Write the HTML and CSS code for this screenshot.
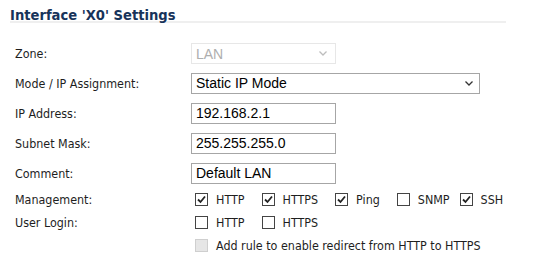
FILE: index.html
```html
<!DOCTYPE html>
<html lang="en">
<head>
    <meta charset="UTF-8">
    <meta name="viewport" content="width=device-width, initial-scale=1.0">
    <title>Interface 'X0' Settings</title>
    <link rel="stylesheet" href="styles.css">
</head>
<body>
    <div class="panel">
        <h1 class="title">Interface 'X0' Settings</h1>

        <form class="form">
            <div class="row">
                <label class="label">Zone:</label>
                <div class="select select-short is-disabled">
                    <select disabled><option>LAN</option></select>
                    <svg class="chevron" width="8" height="5" viewBox="0 0 8 5"><polyline points="0.5,0.5 4,4 7.5,0.5" /></svg>
                </div>
            </div>

            <div class="row">
                <label class="label">Mode / IP Assignment:</label>
                <div class="select select-wide">
                    <select><option>Static IP Mode</option></select>
                    <svg class="chevron" width="8" height="5" viewBox="0 0 8 5"><polyline points="0.5,0.5 4,4 7.5,0.5" /></svg>
                </div>
            </div>

            <div class="row">
                <label class="label">IP Address:</label>
                <input class="field" type="text" value="192.168.2.1">
            </div>

            <div class="row">
                <label class="label">Subnet Mask:</label>
                <input class="field" type="text" value="255.255.255.0">
            </div>

            <div class="row">
                <label class="label">Comment:</label>
                <input class="field" type="text" value="Default LAN">
            </div>

            <div class="row row-check">
                <label class="label">Management:</label>
                <div class="checks">
                    <span class="check"><span class="box on"><svg width="11" height="11" viewBox="0 0 11 11"><polyline points="2,5.5 4.5,8 9,2.5" /></svg></span>HTTP</span>
                    <span class="check"><span class="box on"><svg width="11" height="11" viewBox="0 0 11 11"><polyline points="2,5.5 4.5,8 9,2.5" /></svg></span>HTTPS</span>
                    <span class="check"><span class="box on"><svg width="11" height="11" viewBox="0 0 11 11"><polyline points="2,5.5 4.5,8 9,2.5" /></svg></span>Ping</span>
                    <span class="check check-tight"><span class="box"></span>SNMP</span>
                    <span class="check"><span class="box on"><svg width="11" height="11" viewBox="0 0 11 11"><polyline points="2,5.5 4.5,8 9,2.5" /></svg></span>SSH</span>
                </div>
            </div>

            <div class="row row-check">
                <label class="label">User Login:</label>
                <div class="checks">
                    <span class="check"><span class="box"></span>HTTP</span>
                    <span class="check"><span class="box"></span>HTTPS</span>
                </div>
            </div>

            <div class="row row-check">
                <span class="label"></span>
                <div class="checks">
                    <span class="check"><span class="box off"></span>Add rule to enable redirect from HTTP to HTTPS</span>
                </div>
            </div>
        </form>
    </div>
</body>
</html>
```

FILE: styles.css
```css
:root {
    --navy: #17335a;
    --text: #1e1e1e;
    --border: #a6a6a6;
    --light-border: #dedede;
    --rule: #efefef;
}

* {
    margin: 0;
    padding: 0;
    box-sizing: border-box;
}

body {
    background: #fff;
    color: var(--text);
    font-family: 'DejaVu Sans Condensed', 'DejaVu Sans', sans-serif;
    font-size: 12.4px;
}

.panel {
    width: 540px;
    height: 272px;
}

.title {
    margin: 0 34px 0 10px;
    padding-top: 8px;
    font-size: 14.6px;
    line-height: 13px;
    font-weight: bold;
    color: var(--navy);
    border-bottom: 2px solid var(--rule);
}

.form {
    padding: 16px 0 0 15px;
}

.row {
    display: grid;
    grid-template-columns: 176px 1fr;
    align-items: center;
    height: 30px;
}

.row:first-child {
    height: 29px;
}

.row-check {
    height: 23px;
}

.label {
    color: var(--text);
}

/* selects */
.select {
    position: relative;
    height: 21px;
}

.select-short {
    width: 145px;
}

.select-wide {
    width: 289px;
}

.select select {
    appearance: none;
    -webkit-appearance: none;
    width: 100%;
    height: 100%;
    padding: 0 20px 0 4px;
    border: 1px solid var(--border);
    border-radius: 0;
    background: #fff;
    color: #000;
    font-family: 'Liberation Sans', Arial, sans-serif;
    font-size: 14px;
    outline: none;
}

.chevron {
    position: absolute;
    right: 7px;
    top: 8px;
    fill: none;
    stroke: #333;
    stroke-width: 1.3;
}

.is-disabled select {
    border-color: var(--light-border);
    color: #8c8c8c;
}

.is-disabled .chevron {
    right: 9px;
    stroke: #bdbdbd;
}

/* text inputs */
.field {
    width: 145px;
    height: 21px;
    padding: 0 4px;
    border: 1px solid var(--border);
    border-radius: 0;
    color: #000;
    font-family: 'Liberation Sans', Arial, sans-serif;
    font-size: 14px;
    outline: none;
}

/* checkboxes */
.checks {
    display: flex;
    align-items: center;
    padding-left: 4px;
}

.check {
    display: flex;
    align-items: center;
    gap: 8px;
    margin-right: 17px;
    white-space: nowrap;
}

.check-tight {
    margin-right: 10px;
}

.box {
    display: flex;
    align-items: center;
    justify-content: center;
    width: 13px;
    height: 13px;
    border: 1px solid #444;
    background: #fff;
}

.box svg {
    fill: none;
    stroke: #222;
    stroke-width: 1.8;
}

.box.off {
    border-color: #cfcfcf;
    background: #e6e6e6;
}
```
